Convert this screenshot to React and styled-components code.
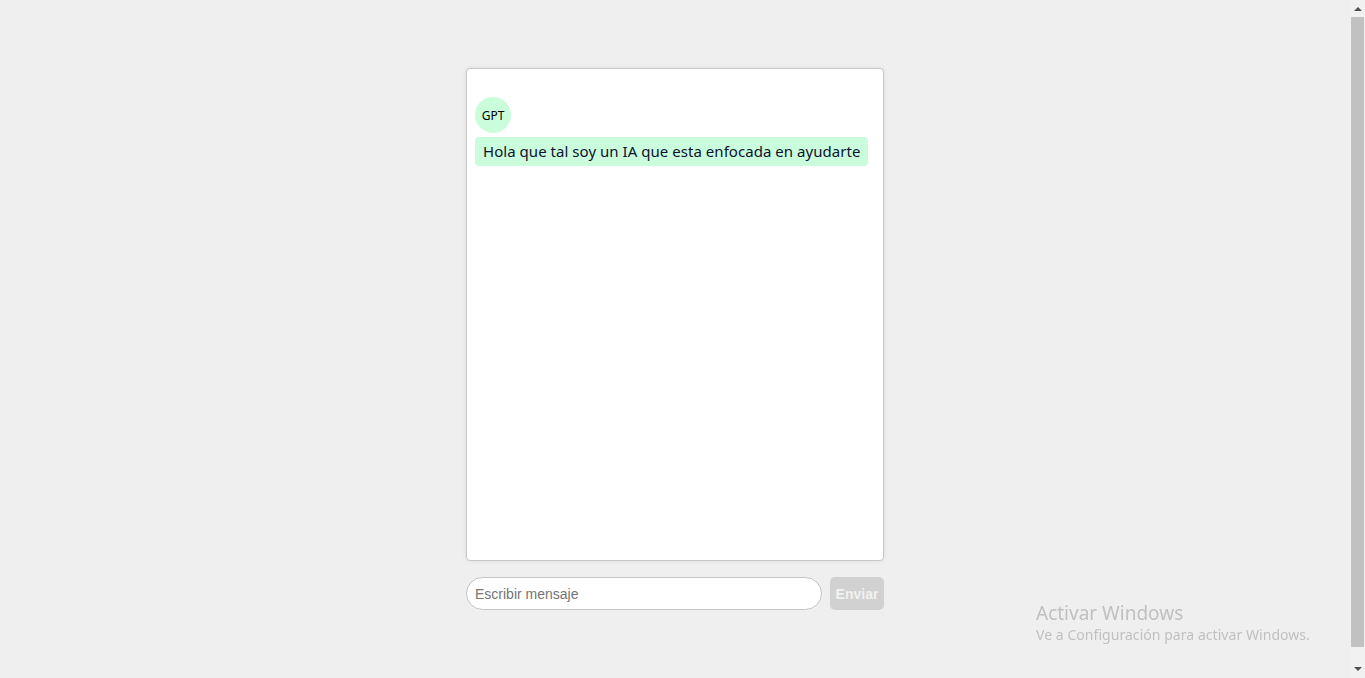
import styled, { createGlobalStyle } from 'styled-components';
import { useState } from 'react';

const GlobalStyle = createGlobalStyle`
  html, body {
    margin: 0;
    padding: 0;
    background: #efefef;
  }
  body {
    font-family: "Noto Sans", "Open Sans", sans-serif;
  }
  * {
    box-sizing: border-box;
  }
`

const Page = styled.div`
  width: calc(100% - 15px);
  min-height: 678px;
  padding-top: 68px;
  display: flex;
  justify-content: center;
`

const Column = styled.div`
  width: 418px;
  display: flex;
  flex-direction: column;
  gap: 16px;
`

const ChatBox = styled.div`
  height: 493px;
  background: #fff;
  border: 1px solid #c8c8c8;
  border-radius: 4px;
  box-shadow: 0 0 4px rgba(0, 0, 0, 0.08);
  padding: 28px 8px 8px;
  display: flex;
  flex-direction: column;
  align-items: flex-start;
  gap: 4px;
  overflow-y: auto;
`

const Avatar = styled.div`
  width: 36px;
  height: 36px;
  border-radius: 50%;
  background: #c9fddc;
  display: flex;
  align-items: center;
  justify-content: center;
  font-size: 12px;
  color: #000;
`

const Bubble = styled.div`
  background: #c9fddc;
  border-radius: 4px;
  padding: 3px 8px;
  font-size: 15px;
  line-height: 23px;
  letter-spacing: 0.04px;
  white-space: nowrap;
  color: #101030;
`

const InputRow = styled.form`
  display: flex;
  gap: 8px;
  height: 33px;
`

const MessageInput = styled.input`
  flex: 1;
  height: 100%;
  border: 1px solid #c4c4c4;
  border-radius: 17px;
  background: #fff;
  padding: 0 8px;
  font-family: "Liberation Sans", Arial, sans-serif;
  font-size: 14px;
  outline: none;
  &::placeholder {
    color: #757575;
  }
`

const SendButton = styled.button`
  width: 54px;
  height: 100%;
  border: none;
  border-radius: 5px;
  background: #d1d1d1;
  color: #f2f2f2;
  font-family: "Liberation Sans", Arial, sans-serif;
  font-weight: bold;
  font-size: 14px;
  padding: 0;
`

const Watermark = styled.div`
  position: fixed;
  left: 1036px;
  top: 601px;
  color: #c0c0c0;
  font-family: "Noto Sans", "Open Sans", sans-serif;
  pointer-events: none;
`

const WatermarkTitle = styled.div`
  font-size: 19px;
  line-height: 24px;
`

const WatermarkText = styled.div`
  font-size: 14px;
  line-height: 20px;
  letter-spacing: 0.05px;
`

const ScrollTrack = styled.div`
  position: fixed;
  top: 0;
  right: 0;
  width: 15px;
  height: 100vh;
  background: #f1f1f1;
  display: flex;
  flex-direction: column;
  align-items: center;
`

const ScrollArrow = styled.div`
  height: 17px;
  width: 15px;
  display: flex;
  align-items: center;
  justify-content: center;
`

const ScrollThumb = styled.div`
  flex: 1;
  width: 13px;
  margin: 0 0 14px 1px;
  align-self: flex-start;
  background: #c1c1c1;
`

const Arrow = ({ down }) => (
  <ScrollArrow>
    <svg width="8" height="5" viewBox="0 0 8 5">
      <path d={down ? 'M0 0 H8 L4 4 Z' : 'M0 5 H8 L4 1 Z'} fill="#505050" />
    </svg>
  </ScrollArrow>
)

const Message = ({ text }) => (
  <>
    <Avatar>GPT</Avatar>
    <Bubble>{text}</Bubble>
  </>
)

export default function App() {
  const [value, setValue] = useState('');
  const messages = ['Hola que tal soy un IA que esta enfocada en ayudarte'];

  return (
    <>
      <GlobalStyle />
      <Page>
        <Column>
          <ChatBox>
            {messages.map((m, i) => <Message key={i} text={m} />)}
          </ChatBox>
          <InputRow onSubmit={(e) => e.preventDefault()}>
            <MessageInput
              placeholder="Escribir mensaje"
              value={value}
              onChange={(e) => setValue(e.target.value)}
            />
            <SendButton disabled={!value}>Enviar</SendButton>
          </InputRow>
        </Column>
      </Page>
      <Watermark>
        <WatermarkTitle>Activar Windows</WatermarkTitle>
        <WatermarkText>Ve a Configuración para activar Windows.</WatermarkText>
      </Watermark>
      <ScrollTrack>
        <Arrow />
        <ScrollThumb />
        <Arrow down />
      </ScrollTrack>
    </>
  )
}
